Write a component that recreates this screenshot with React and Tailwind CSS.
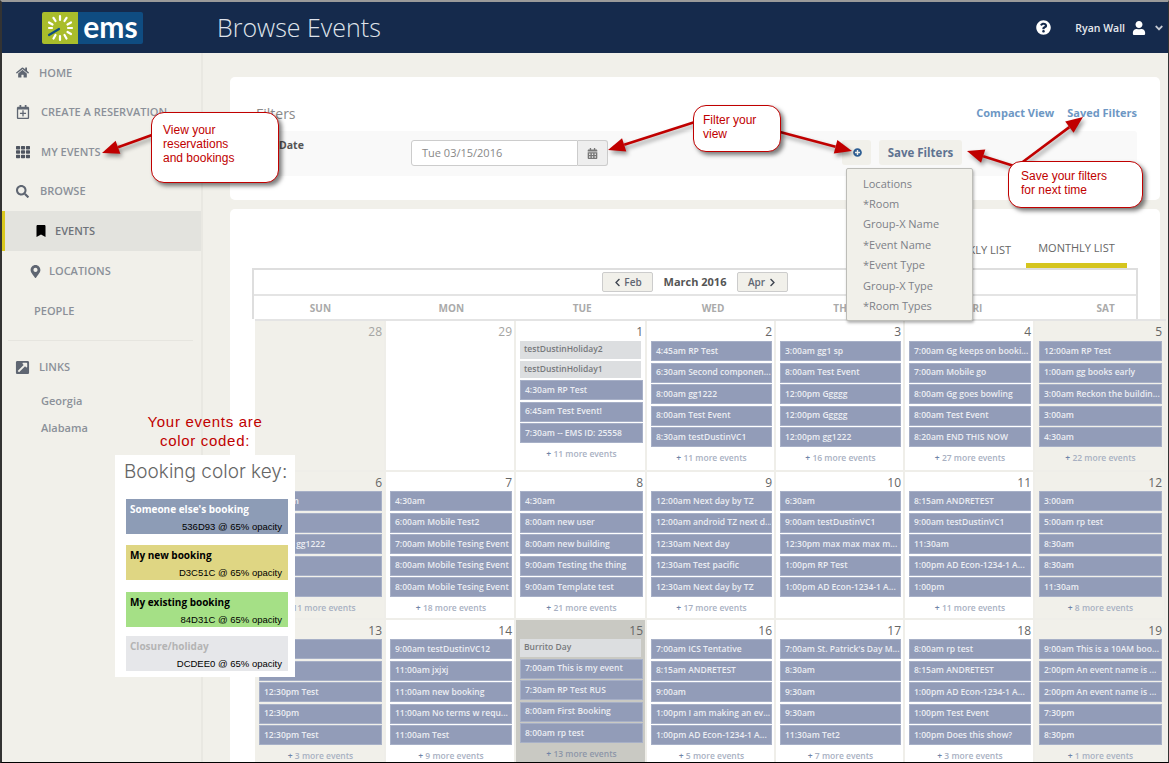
import React from 'react';
import { FaHome, FaRegCalendarPlus, FaTh, FaSearch, FaBookmark, FaMapMarkerAlt, FaExternalLinkSquareAlt, FaQuestionCircle, FaUser, FaAngleDown, FaPlusCircle, FaCalendarAlt, FaChevronLeft, FaChevronRight } from 'react-icons/fa';

const weeks = [
    [
        { d: 28, muted: true, weekend: true, events: [] },
        { d: 29, muted: true, events: [] },
        { d: 1, holidays: ['testDustinHoliday2', 'testDustinHoliday1'], events: ['4:30am RP Test', '6:45am Test Event!', '7:30am -- EMS ID: 25558'], more: 11 },
        { d: 2, events: ['4:45am RP Test', '6:30am Second componen...', '8:00am gg1222', '8:00am Test Event', '8:30am testDustinVC1'], more: 11 },
        { d: 3, events: ['3:00am gg1 sp', '8:00am Test Event', '12:00pm Ggggg', '12:00pm Ggggg', '12:00pm gg1222'], more: 16 },
        { d: 4, events: ['7:00am Gg keeps on booki...', '7:00am Mobile go', '8:00am Gg goes bowling', '8:00am Test Event', '8:20am END THIS NOW'], more: 27 },
        { d: 5, weekend: true, events: ['12:00am RP Test', '1:00am gg books early', '3:00am Reckon the buildin...', '3:00am', '4:30am'], more: 22 },
    ],
    [
        { d: 6, weekend: true, events: ['12:00am', '6:00am', '8:00am gg1222', '8:00am', '8:00am'], more: 11 },
        { d: 7, events: ['4:30am', '6:00am Mobile Test2', '7:00am Mobile Tesing Event', '8:00am Mobile Tesing Event', '8:00am Mobile Tesing Event'], more: 18 },
        { d: 8, events: ['4:30am', '8:00am new user', '8:00am new building', '9:00am Testing the thing', '9:00am Template test'], more: 21 },
        { d: 9, events: ['12:00am Next day by TZ', '12:00am android TZ next d...', '12:30am Next day', '12:30am Test pacific', '12:30am Next day by TZ'], more: 17 },
        { d: 10, events: ['6:30am', '9:00am testDustinVC1', '12:30pm max max max m...', '1:00pm RP Test', '1:00pm AD Econ-1234-1 A...'] },
        { d: 11, events: ['8:15am ANDRETEST', '9:00am testDustinVC1', '11:30am', '1:00pm AD Econ-1234-1 A...', '1:00pm'], more: 11 },
        { d: 12, weekend: true, events: ['3:00am', '5:00am rp test', '8:30am', '8:30am', '11:30am'], more: 8 },
    ],
    [
        { d: 13, weekend: true, events: ['9:00am', '9:30am', '12:30pm Test', '12:30pm', '12:30pm Test'], more: 3 },
        { d: 14, events: ['9:00am testDustinVC12', '11:00am jxjxj', '11:00am new booking', '11:00am No terms w requ...', '11:00am Test'], more: 9 },
        { d: 15, today: true, holidays: ['Burrito Day'], events: ['7:00am This is my event', '7:30am RP Test RUS', '8:00am First Booking', '8:00am rp test'], more: 13 },
        { d: 16, events: ['7:00am ICS Tentative', '8:15am ANDRETEST', '9:00am', '1:00pm I am making an ev...', '1:00pm AD Econ-1234-1 A...'], more: 5 },
        { d: 17, events: ["7:00am St. Patrick's Day M...", '8:30am', '9:30am', '9:30am', '11:30am Tet2'], more: 7 },
        { d: 18, events: ['8:00am rp test', '8:15am ANDRETEST', '1:00pm AD Econ-1234-1 A...', '1:00pm Test Event', '1:00pm Does this show?'], more: 3 },
        { d: 19, weekend: true, events: ['9:00am This is a 10AM boo...', '2:00pm An event name is ...', '2:00pm An event name is ...', '7:30pm', '8:30pm'], more: 1 },
    ],
];

const Logo = () => (
    <div className="flex h-[32px] w-[101px] overflow-hidden rounded-[2px]">
        <div className="flex w-[36px] items-center justify-center bg-[#a9bd2b]">
            <svg width="28" height="28" viewBox="0 0 28 28">
                <g stroke="#fff" strokeWidth="2.2" strokeLinecap="round">
                    <line x1="14" y1="2" x2="14" y2="6" />
                    <line x1="20.5" y1="3.8" x2="18.5" y2="7" />
                    <line x1="25" y1="8.5" x2="21.5" y2="10.5" />
                    <line x1="26" y1="14" x2="22" y2="14" />
                    <line x1="25" y1="20" x2="21.5" y2="18" />
                    <line x1="20.5" y1="24.5" x2="18.5" y2="21" />
                    <line x1="14" y1="26" x2="14" y2="22" />
                    <line x1="7.5" y1="24.5" x2="9.5" y2="21" />
                    <line x1="3" y1="14" x2="6" y2="14" />
                    <line x1="3" y1="8.5" x2="6.5" y2="10.5" />
                    <line x1="7.5" y1="3.8" x2="9.5" y2="7" />
                </g>
                <line x1="3" y1="21" x2="13" y2="15" stroke="#0f4c81" strokeWidth="2.2" strokeLinecap="round" />
            </svg>
        </div>
        <div className="flex flex-1 items-center justify-center bg-[#0f4c81] pb-[3px] font-['Lato'] text-[30px] leading-none font-bold text-white">ems</div>
    </div>
);

const TopBar = () => (
    <header className="flex h-[53px] shrink-0 items-center bg-[#152a4c] pt-[2px]">
        <div className="ml-[42px]"><Logo /></div>
        <h1 className="ml-[74px] text-[25px] leading-none font-light text-[#dfe3ea]">Browse Events</h1>
        <div className="ml-auto flex items-center pr-[4px] text-white">
            <FaQuestionCircle size={15} />
            <span className="ml-[24px] pt-[2px] text-[10.5px] font-semibold text-[#e6e9ee]">Ryan Wall</span>
            <FaUser size={14} className="ml-[7px]" />
            <FaAngleDown size={12} className="ml-[7px] text-[#c5cad3]" />
        </div>
    </header>
);

const NavItem = ({ icon, label, className }) => (
    <div className={`flex h-[39.6px] items-center text-[11px] text-[#8b9099] ${className}`}>
        {icon}
        <span>{label}</span>
    </div>
);

const Sidebar = () => (
    <aside className="w-[201px] shrink-0 font-semibold">
        <NavItem className="pl-[16px]" icon={<FaHome size={13} className="mr-[10px] text-[#5f6672]" />} label="HOME" />
        <NavItem className="pl-[16px]" icon={<FaRegCalendarPlus size={14} className="mr-[11px] text-[#5f6672]" />} label="CREATE A RESERVATION" />
        <NavItem className="pl-[16px]" icon={<FaTh size={14} className="mr-[11px] text-[#4f5560]" />} label="MY EVENTS" />
        <NavItem className="pl-[16px]" icon={<FaSearch size={13} className="mr-[11px] text-[#5f6672]" />} label="BROWSE" />
        <div className="flex h-[40px] items-center border-l-[5px] border-[#d9c81f] bg-[#e3e3de] pl-[30px] text-[11px] text-[#6f737a]">
            <FaBookmark size={12} className="mr-[8px] text-black" />
            <span>EVENTS</span>
        </div>
        <NavItem className="pl-[29px]" icon={<FaMapMarkerAlt size={13} className="mr-[7px] text-[#5f6672]" />} label="LOCATIONS" />
        <NavItem className="pl-[34px]" label="PEOPLE" />
        <div className="mx-[8px] mt-[9px] border-t border-[#e6e5df]" />
        <NavItem className="mt-[7px] pl-[15px]" icon={<FaExternalLinkSquareAlt size={15} className="mr-[9px] text-[#5f6672]" />} label="LINKS" />
        <div className="mt-[5px] flex flex-col gap-[9px] pl-[41px] text-[11px] leading-[18px] font-semibold text-[#8b9099]">
            <span>Georgia</span>
            <span>Alabama</span>
        </div>
    </aside>
);

const FilterCard = () => (
    <section className="h-[123px] w-[930px] rounded-[5px] bg-white pt-[26px] pl-[26px]">
        <div className="flex h-[28px] w-[881px] items-center justify-between pb-[8px]">
            <span className="text-[14px] text-[#8a8a8a]">Filters</span>
            <div className="flex gap-[13px] text-[11px] font-bold text-[#6d97c4]">
                <span>Compact View</span>
                <span>Saved Filters</span>
            </div>
        </div>
        <div className="flex h-[45px] w-[881px] items-start rounded-[3px] bg-[#f9f9f9] pt-[9px]">
            <span className="ml-[23px] w-[132px] text-[10.5px] leading-[10px] font-bold text-[#555]">Date</span>
            <div className="flex h-[26px] w-[167px] items-center rounded-l-[3px] border border-[#ccc] bg-white pl-[10px] text-[11px] text-[#888]">Tue 03/15/2016</div>
            <div className="flex h-[26px] w-[30px] items-center justify-center rounded-r-[3px] border border-l-0 border-[#ccc] bg-[#eee] text-[#777]">
                <FaCalendarAlt size={11} />
            </div>
            <div className="ml-[234px] flex h-[25px] w-[29px] items-center justify-center rounded-[3px] bg-[#f1f0ea] pl-[2px] text-[#2f5f94]">
                <FaPlusCircle size={9} />
            </div>
            <div className="ml-[8px] flex h-[25px] w-[83px] items-center justify-center rounded-[3px] bg-[#f1f0ea] text-[11.5px] font-bold text-[#5f7391]">Save Filters</div>
        </div>
    </section>
);

const Event = ({ label }) => (
    <div className="mb-[1.6px] flex h-[20px] items-center overflow-hidden border border-[#a7b0c7] bg-[#929cb8] pl-[4px] text-[8.5px] font-semibold whitespace-nowrap text-[#eceef3]">{label}</div>
);

const Holiday = ({ label }) => (
    <div className="mr-[2px] mb-[2px] flex h-[17.5px] items-center bg-[#dcdee0] pl-[4px] text-[8.5px] font-semibold text-[#77797c]">{label}</div>
);

const Cell = ({ day, numberHeight }) => {
    let bg = 'bg-white';
    if (day.weekend) bg = 'bg-[#f1f0ea]';
    if (day.today) bg = 'bg-[#c9c9c3]';
    return (
        <div className={`overflow-hidden border-r-2 border-b-2 border-[#efeee9] pr-[2px] pl-[4px] ${bg}`}>
            <div className={`text-right text-[12px] ${numberHeight} ${day.muted ? 'text-[#a5a5a2]' : 'text-[#666]'}`}>{day.d}</div>
            <div>
                {(day.holidays || []).map((h) => <Holiday key={h} label={h} />)}
                {day.events.map((e, i) => <Event key={i} label={e} />)}
            </div>
            {day.more && (
                <div className={`mt-[4px] text-center text-[8.5px] leading-[14px] font-semibold ${day.today ? 'text-[#8d96a8]' : 'text-[#a8b0c2]'}`}>
                    <span className="text-[#6f84a8]">+</span> {day.more} more events
                </div>
            )}
        </div>
    );
};

const Calendar = () => (
    <div className="ml-[22px]">
        <div className="w-[886px] border-x-2 border-t-2 border-[#dedede]">
            <div className="flex h-[26px] items-center justify-center border-b-2 border-[#e4e4e4]">
                <div className="flex h-[20px] w-[51px] items-center justify-center gap-[2px] rounded-[2px] border border-[#ccc] bg-[#f1f0ea] text-[10px] font-semibold text-[#5f6672]">
                    <FaChevronLeft size={9} className="text-[#3f4650]" /> Feb
                </div>
                <span className="mx-[10.5px] text-[11px] font-bold text-[#555]">March 2016</span>
                <div className="flex h-[20px] w-[51px] items-center justify-center gap-[3px] rounded-[2px] border border-[#ccc] bg-[#f1f0ea] text-[10px] font-semibold text-[#5f6672]">
                    Apr <FaChevronRight size={9} className="text-[#3f4650]" />
                </div>
            </div>
            <div className="ml-[1px] grid h-[23px] w-[916px] grid-cols-7 items-center pt-[1px] text-center text-[10px] font-bold text-[#aaa]">
                {['SUN', 'MON', 'TUE', 'WED', 'THU', 'FRI', 'SAT'].map((d) => <span key={d}>{d}</span>)}
            </div>
        </div>
        <div className="ml-[3px] grid w-[911px] grid-cols-[131px_130px_131px_129px_129px_130px_131px] grid-rows-[151px_148px_148px] border-t-2 border-[#e4e4e4]">
            {weeks.map((week, i) => week.map((day) => (
                <Cell key={day.d} day={day} numberHeight={i === 0 ? 'h-[20px] leading-[22px]' : 'h-[19px] leading-[22px]'} />
            )))}
        </div>
    </div>
);

const CalendarCard = () => (
    <section className="mt-[9px] h-[600px] w-[930px] rounded-t-[5px] bg-white">
        <div className="flex h-[59px] items-end justify-end pr-[33px] text-[11px] text-[#666]">
            <div className="mr-[3px] px-[12px] pb-[10px]">WEEKLY LIST</div>
            <div className="w-[101px] border-b-[5px] border-[#d5c51e] pb-[7px] text-center">MONTHLY LIST</div>
        </div>
        <Calendar />
    </section>
);

const FilterMenu = () => (
    <div className="absolute top-[168px] left-[846px] flex h-[153px] w-[127px] flex-col rounded-[2px] border border-[#bdbdb8] bg-[#f1f0ea] pt-[4.5px] pl-[16px] text-[11px] leading-[20.4px] text-[#7d8088] shadow-[1px_2px_3px_rgba(0,0,0,0.3)]">
        {['Locations', '*Room', 'Group-X Name', '*Event Name', '*Event Type', 'Group-X Type', '*Room Types'].map((m) => <span key={m}>{m}</span>)}
    </div>
);

const Arrow = ({ from, to }) => {
    const [x1, y1] = from;
    const [x2, y2] = to;
    const len = Math.hypot(x2 - x1, y2 - y1);
    const ux = (x2 - x1) / len;
    const uy = (y2 - y1) / len;
    const bx = x2 - ux * 17;
    const by = y2 - uy * 17;
    const points = `${x2},${y2} ${bx - uy * 7},${by + ux * 7} ${bx + uy * 7},${by - ux * 7}`;
    return (
        <g>
            <line x1={x1} y1={y1} x2={bx} y2={by} stroke="#c00000" strokeWidth="2.6" />
            <polygon points={points} fill="#c00000" />
        </g>
    );
};

const Arrows = () => (
    <svg className="absolute inset-0 drop-shadow-[2px_3px_2px_rgba(0,0,0,0.4)]" width="1169" height="763">
        <Arrow from={[152, 135]} to={[102, 153]} />
        <Arrow from={[695, 122]} to={[608, 150]} />
        <Arrow from={[780, 132]} to={[852, 151]} />
        <Arrow from={[1014, 166]} to={[967, 151]} />
        <Arrow from={[1020, 164]} to={[1083, 117]} />
    </svg>
);

const Callout = ({ lines, className }) => (
    <div className={`absolute rounded-[13px] border border-[#c00000] bg-white font-['Liberation_Sans',sans-serif] text-[12px] leading-[14px] text-[#c00000] shadow-[3px_3px_4px_rgba(0,0,0,0.5)] ${className}`}>
        {lines.map((l) => <div key={l}>{l}</div>)}
    </div>
);

const keys = [
    { title: "Someone else's booking", code: '536D93 @ 65% opacity', box: 'bg-[#8d9cb6] text-white', gap: 'mb-[11px]' },
    { title: 'My new booking', code: 'D3C51C @ 65% opacity', box: 'bg-[#dfd683] text-black', gap: 'mb-[12px]' },
    { title: 'My existing booking', code: '84D31C @ 65% opacity', box: 'bg-[#a5e086] text-black', gap: 'mb-[9px]' },
    { title: 'Closure/holiday', code: 'DCDEE0 @ 65% opacity', box: 'bg-[#e6e7ea] text-[#b4b4b4]', gap: '' },
];

const ColorKey = () => (
    <>
        <div className="absolute top-[412px] left-[115px] w-[180px] text-center font-['Liberation_Sans',sans-serif] text-[15px] leading-[19px] tracking-[0.7px] text-[#c00000]">
            <div>Your events are</div>
            <div>color coded:</div>
        </div>
        <div className="absolute top-[455px] left-[115px] h-[222px] w-[180px] bg-white pt-[4px] pl-[9px]">
            <div className="h-[40px] font-['Inter',sans-serif] text-[19px] leading-[25px] font-light whitespace-nowrap text-[#666]">Booking color key:</div>
            {keys.map((k) => (
                <div key={k.title} className={`ml-[2px] flex h-[35px] w-[162px] flex-col justify-between px-[4px] pt-[3px] pb-[1px] ${k.box} ${k.gap}`}>
                    <div className="text-[10px] leading-[14px] font-bold">{k.title}</div>
                    <div className="pr-[2px] text-right font-['Liberation_Sans',sans-serif] text-[9.5px] leading-[12px] text-black">{k.code}</div>
                </div>
            ))}
        </div>
    </>
);

export default function App() {
    return (
        <div className="relative flex h-[763px] w-[1169px] flex-col overflow-hidden bg-[#f1f0ea] font-['Open_Sans',sans-serif]">
            <TopBar />
            <div className="flex min-h-0 flex-1">
                <Sidebar />
                <main className="flex-1 border-l-2 border-[#e9e8e2] pt-[24px] pl-[27px]">
                    <FilterCard />
                    <CalendarCard />
                </main>
            </div>
            <FilterMenu />
            <Arrows />
            <Callout lines={['View your', 'reservations', 'and bookings']} className="top-[112px] left-[151px] h-[71px] w-[128px] pt-[10px] pl-[11px]" />
            <Callout lines={['Filter your', 'view']} className="top-[105px] left-[693px] h-[47px] w-[88px] pt-[7px] pl-[9px]" />
            <Callout lines={['Save your filters', 'for next time']} className="top-[161px] left-[1008px] h-[47px] w-[135px] pt-[7px] pl-[12px]" />
            <ColorKey />
            <div className="pointer-events-none absolute inset-0 border-t-2 border-r border-b border-l-2 border-t-[#9a9a9a] border-r-[#333] border-b-black border-l-[#333]" />
        </div>
    );
}
